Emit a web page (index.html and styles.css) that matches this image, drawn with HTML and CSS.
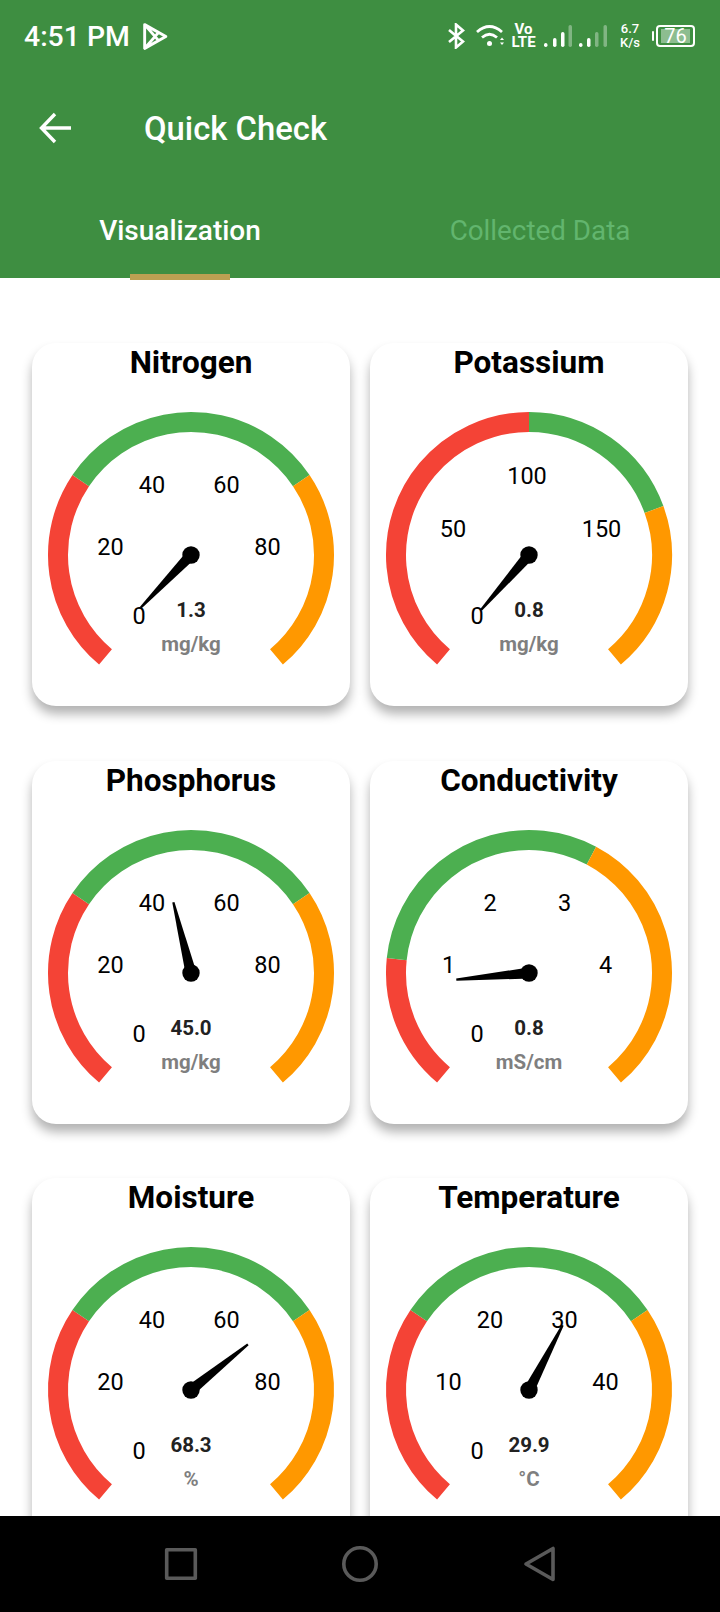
FILE: index.html
```html
<!DOCTYPE html>
<html lang="en">
<head>
  <meta charset="UTF-8">
  <meta name="viewport" content="width=device-width, initial-scale=1.0">
  <title>Quick Check</title>
  <link rel="stylesheet" href="styles.css">
</head>
<body>

  <div class="screen">
    <header class="header">
      <div class="status">
        <span class="time">4:51 PM</span>
        <svg class="ic-play" width="28" height="31" viewBox="0 0 26 30">
          <path d="M3 3.5 L23.5 15 L3 26.5 Z M3 3.5 L16.5 19 M3 26.5 L16.5 11"/>
        </svg>
        <svg class="ic-bt" width="18" height="26" viewBox="0 0 18 26">
          <path d="M2 7 L16 18.5 L9 24.5 V1.5 L16 7.5 L2 19"/>
        </svg>
        <svg class="ic-wifi" width="28" height="24" viewBox="0 0 28 24">
          <path d="M1 8 Q13.5 -3 26 8 M6 13.500 Q13.500 7 21 13.500"/>
          <circle cx="13.500" cy="19.500" r="2.500"/>
          <polygon points="26,13.500 28,16 24,16"/>
          <polygon points="24,18.500 28,18.500 26,21"/>
        </svg>
        <div class="volte"><span>Vo</span><span>LTE</span></div>
        <svg class="ic-signal" width="63" height="24" viewBox="0 0 63 24">
          <rect class="on" x="0" y="19" width="3.5" height="4" rx="1.7"/>
          <rect class="on" x="9" y="14" width="3.5" height="9" rx="1.7"/>
          <rect class="on" x="17" y="8" width="3.5" height="15" rx="1.7"/>
          <rect class="off" x="24.500" y="1" width="3.5" height="22" rx="1.7"/>
          <rect class="on" x="35" y="19" width="3.5" height="4" rx="1.7"/>
          <rect class="on" x="43" y="14" width="3.5" height="9" rx="1.7"/>
          <rect class="off" x="51" y="8" width="3.5" height="15" rx="1.7"/>
          <rect class="off" x="59.500" y="1" width="3.5" height="22" rx="1.7"/>
        </svg>
        <div class="speed"><span>6.7</span><span>K/s</span></div>
        <div class="battery">
          <span class="battery-nub"></span>
          <span class="battery-body">76</span>
        </div>
      </div>

      <div class="appbar">
        <svg class="ic-back" width="34" height="32" viewBox="0 0 34 32">
          <path d="M32 16 H3 M16 2 L2.500 16 L16 30"/>
        </svg>
        <h1>Quick Check</h1>
      </div>

      <div class="tabs">
        <div class="tab active">
          <span>Visualization</span>
          <i class="tab-line"></i>
        </div>
        <div class="tab">
          <span>Collected Data</span>
        </div>
      </div>
    </header>

    <main class="grid">

      <section class="card">
        <h2>Nitrogen</h2>
        <svg class="gauge" viewBox="0 0 318 325">
          <circle class="arc red" cx="159" cy="174" r="133" pathLength="360" stroke-dasharray="84 360" transform="rotate(130 159 174)"/>
          <circle class="arc green" cx="159" cy="174" r="133" pathLength="360" stroke-dasharray="112 360" transform="rotate(214 159 174)"/>
          <circle class="arc orange" cx="159" cy="174" r="133" pathLength="360" stroke-dasharray="84 360" transform="rotate(326 159 174)"/>
          <text class="tick" x="107" y="243">0</text>
          <text class="tick" x="78.500" y="174">20</text>
          <text class="tick" x="120" y="112">40</text>
          <text class="tick" x="194.500" y="112">60</text>
          <text class="tick" x="235.500" y="174">80</text>
          <polygon class="needle" points="159,168.500 232,172.900 232,175.100 159,179.500" transform="rotate(133.640 159 174)"/>
          <circle class="needle" cx="159" cy="174" r="8.700"/>
          <text class="value" x="159" y="236">1.3</text>
          <text class="unit" x="159" y="270">mg/kg</text>
        </svg>
      </section>

      <section class="card">
        <h2>Potassium</h2>
        <svg class="gauge" viewBox="0 0 318 325">
          <circle class="arc red" cx="159" cy="174" r="133" pathLength="360" stroke-dasharray="140 360" transform="rotate(130 159 174)"/>
          <circle class="arc green" cx="159" cy="174" r="133" pathLength="360" stroke-dasharray="70 360" transform="rotate(270 159 174)"/>
          <circle class="arc orange" cx="159" cy="174" r="133" pathLength="360" stroke-dasharray="70 360" transform="rotate(340 159 174)"/>
          <text class="tick" x="107" y="243">0</text>
          <text class="tick" x="83" y="155.500">50</text>
          <text class="tick" x="157" y="103">100</text>
          <text class="tick" x="231.500" y="155.500">150</text>
          <polygon class="needle" points="159,168.500 232,172.900 232,175.100 159,179.500" transform="rotate(131.120 159 174)"/>
          <circle class="needle" cx="159" cy="174" r="8.700"/>
          <text class="value" x="159" y="236">0.8</text>
          <text class="unit" x="159" y="270">mg/kg</text>
        </svg>
      </section>

      <section class="card">
        <h2>Phosphorus</h2>
        <svg class="gauge" viewBox="0 0 318 325">
          <circle class="arc red" cx="159" cy="174" r="133" pathLength="360" stroke-dasharray="84 360" transform="rotate(130 159 174)"/>
          <circle class="arc green" cx="159" cy="174" r="133" pathLength="360" stroke-dasharray="112 360" transform="rotate(214 159 174)"/>
          <circle class="arc orange" cx="159" cy="174" r="133" pathLength="360" stroke-dasharray="84 360" transform="rotate(326 159 174)"/>
          <text class="tick" x="107" y="243">0</text>
          <text class="tick" x="78.500" y="174">20</text>
          <text class="tick" x="120" y="112">40</text>
          <text class="tick" x="194.500" y="112">60</text>
          <text class="tick" x="235.500" y="174">80</text>
          <polygon class="needle" points="159,168.500 232,172.900 232,175.100 159,179.500" transform="rotate(256 159 174)"/>
          <circle class="needle" cx="159" cy="174" r="8.700"/>
          <text class="value" x="159" y="235.500">45.0</text>
          <text class="unit" x="159" y="270">mg/kg</text>
        </svg>
      </section>

      <section class="card">
        <h2>Conductivity</h2>
        <svg class="gauge" viewBox="0 0 318 325">
          <circle class="arc red" cx="159" cy="174" r="133" pathLength="360" stroke-dasharray="56 360" transform="rotate(130 159 174)"/>
          <circle class="arc green" cx="159" cy="174" r="133" pathLength="360" stroke-dasharray="112 360" transform="rotate(186 159 174)"/>
          <circle class="arc orange" cx="159" cy="174" r="133" pathLength="360" stroke-dasharray="112 360" transform="rotate(298 159 174)"/>
          <text class="tick" x="107" y="243">0</text>
          <text class="tick" x="78.500" y="174">1</text>
          <text class="tick" x="120" y="112">2</text>
          <text class="tick" x="194.500" y="112">3</text>
          <text class="tick" x="235.500" y="174">4</text>
          <polygon class="needle" points="159,168.500 232,172.900 232,175.100 159,179.500" transform="rotate(174.800 159 174)"/>
          <circle class="needle" cx="159" cy="174" r="8.700"/>
          <text class="value" x="159" y="235.500">0.8</text>
          <text class="unit" x="159" y="270">mS/cm</text>
        </svg>
      </section>

      <section class="card">
        <h2>Moisture</h2>
        <svg class="gauge" viewBox="0 0 318 325">
          <circle class="arc red" cx="159" cy="174" r="133" pathLength="360" stroke-dasharray="84 360" transform="rotate(130 159 174)"/>
          <circle class="arc green" cx="159" cy="174" r="133" pathLength="360" stroke-dasharray="112 360" transform="rotate(214 159 174)"/>
          <circle class="arc orange" cx="159" cy="174" r="133" pathLength="360" stroke-dasharray="84 360" transform="rotate(326 159 174)"/>
          <text class="tick" x="107" y="243">0</text>
          <text class="tick" x="78.500" y="174">20</text>
          <text class="tick" x="120" y="112">40</text>
          <text class="tick" x="194.500" y="112">60</text>
          <text class="tick" x="235.500" y="174">80</text>
          <polygon class="needle" points="159,168.500 232,172.900 232,175.100 159,179.500" transform="rotate(321.240 159 174)"/>
          <circle class="needle" cx="159" cy="174" r="8.700"/>
          <text class="value" x="159" y="236">68.3</text>
          <text class="unit" x="159" y="270">%</text>
        </svg>
      </section>

      <section class="card">
        <h2>Temperature</h2>
        <svg class="gauge" viewBox="0 0 318 325">
          <circle class="arc red" cx="159" cy="174" r="133" pathLength="360" stroke-dasharray="84 360" transform="rotate(130 159 174)"/>
          <circle class="arc green" cx="159" cy="174" r="133" pathLength="360" stroke-dasharray="112 360" transform="rotate(214 159 174)"/>
          <circle class="arc orange" cx="159" cy="174" r="133" pathLength="360" stroke-dasharray="84 360" transform="rotate(326 159 174)"/>
          <text class="tick" x="107" y="243">0</text>
          <text class="tick" x="78.500" y="174">10</text>
          <text class="tick" x="120" y="112">20</text>
          <text class="tick" x="194.500" y="112">30</text>
          <text class="tick" x="235.500" y="174">40</text>
          <polygon class="needle" points="159,168.500 232,172.900 232,175.100 159,179.500" transform="rotate(297.440 159 174)"/>
          <circle class="needle" cx="159" cy="174" r="8.700"/>
          <text class="value" x="159" y="236">29.9</text>
          <text class="unit" x="159" y="270">°C</text>
        </svg>
      </section>

    </main>

    <nav class="navbar">
      <svg width="36" height="36" viewBox="0 0 36 36"><rect x="3.700" y="3.700" width="28.600" height="28.600"/></svg>
      <svg width="36" height="36" viewBox="0 0 36 36"><circle cx="18" cy="18" r="16.200"/></svg>
      <svg width="36" height="36" viewBox="0 0 36 36"><path d="M32 2.500 V33.500 L5 18 Z"/></svg>
    </nav>
  </div>

</body>
</html>
```

FILE: styles.css
```css
body {
  margin: 0;
  font-family: Roboto, "Noto Sans", sans-serif;
  background-color: #fff;
  color: #000;
}
.screen {
  height: 100vh;
  display: flex;
  flex-direction: column;
  overflow: hidden;
}

/* header */
.header {
  flex: none;
  background-color: #3e8e41;
  color: #fff;
}
.status {
  height: 72px;
  display: flex;
  align-items: center;
  padding: 0 25px 0 24px;
}
.status svg {
  flex: none;
  display: block;
  fill: none;
  stroke: #fff;
}
.time {
  font-size: 28.4px;
  font-weight: 500;
}
.ic-play {
  margin-left: 11px;
  stroke-width: 2.8;
  stroke-linejoin: round;
}
.ic-bt {
  margin-left: auto;
  stroke-width: 2.6;
}
.ic-wifi {
  margin-left: 11px;
  stroke-width: 2.8;
}
.status .ic-wifi circle,
.status .ic-wifi polygon {
  fill: #fff;
  stroke: none;
}
.volte {
  margin-left: 7px;
  width: 25px;
  display: flex;
  flex-direction: column;
  align-items: center;
  font-size: 15px;
  font-weight: 700;
  line-height: 13px;
}
.ic-signal {
  margin-left: 8px;
}
.status .ic-signal rect {
  stroke: none;
}
.status .ic-signal .on {
  fill: #fff;
}
.status .ic-signal .off {
  fill: rgba(255, 255, 255, 0.35);
}
.speed {
  margin-left: 13px;
  width: 20px;
  display: flex;
  flex-direction: column;
  align-items: center;
  font-size: 13px;
  font-weight: 500;
  line-height: 14px;
}
.battery {
  margin-left: 12px;
  display: flex;
  align-items: center;
  gap: 2px;
}
.battery-nub {
  width: 2px;
  height: 10px;
  background-color: #fff;
  border-radius: 1px;
}
.battery-body {
  box-sizing: border-box;
  width: 39px;
  height: 22px;
  border: 2px solid #fff;
  border-radius: 4px;
  font-size: 20px;
  line-height: 18px;
  text-align: center;
  background: linear-gradient(#8dbd90, #8dbd90) 3px 50% / 29px 14px no-repeat;
}
.appbar {
  height: 110px;
  display: flex;
  align-items: center;
  padding: 2px 0 0 39px;
  box-sizing: border-box;
}
.ic-back {
  display: block;
  fill: none;
  stroke: #fff;
  stroke-width: 3.4;
}
.appbar h1 {
  margin: 1px 0 0 71px;
  font-size: 32.8px;
  font-weight: 500;
}
.tabs {
  height: 96px;
  display: flex;
}
.tab {
  flex: 1;
  display: flex;
  flex-direction: column;
  align-items: center;
  padding-top: 31px;
  font-size: 27.8px;
  line-height: 36px;
  color: #62b56e;
}
.tab.active {
  color: #fff;
  font-size: 28px;
  font-weight: 500;
}
.tab-line {
  flex: none;
  width: 100px;
  height: 6px;
  margin-top: 25px;
  background-color: #bba052;
}

/* gauge cards */
.grid {
  flex: 1;
  min-height: 0;
  overflow: hidden;
  display: grid;
  grid-template-columns: 318px 318px;
  grid-auto-rows: 363px;
  column-gap: 20px;
  row-gap: 54.5px;
  padding: 65px 32px 0;
}
.card {
  background-color: #fff;
  border-radius: 24px;
  box-shadow: 0 8px 11px rgba(0, 0, 0, 0.3);
}
.card h2 {
  margin: 0;
  height: 38px;
  font-size: 31.5px;
  font-weight: 700;
  line-height: 39px;
  text-align: center;
}
.gauge {
  display: block;
  width: 318px;
  height: 325px;
}
.arc {
  fill: none;
  stroke-width: 20;
}
.red {
  stroke: #f44336;
}
.green {
  stroke: #4caf50;
}
.orange {
  stroke: #ff9800;
}
.tick {
  font-size: 23.5px;
  text-anchor: middle;
}
.value {
  font-size: 20.5px;
  font-weight: 700;
  text-anchor: middle;
  fill: #222;
}
.unit {
  font-size: 20.5px;
  font-weight: 700;
  text-anchor: middle;
  fill: #7f7f7f;
}
.needle {
  fill: #000;
}

/* android nav */
.navbar {
  flex: none;
  height: 96px;
  background-color: #000;
  display: flex;
  justify-content: center;
  align-items: center;
  gap: 143px;
}
.navbar svg {
  display: block;
  fill: none;
  stroke: #5a5a5a;
  stroke-width: 3.6;
  stroke-linejoin: round;
}
```
